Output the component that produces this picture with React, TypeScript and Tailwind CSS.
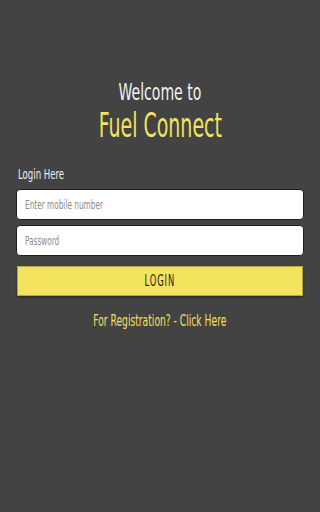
import React, { useState } from 'react';

// Narrow face: the screen uses a very condensed display font, so squeeze a condensed one
const font = { fontFamily: '"DejaVu Sans Condensed", "DejaVu Sans", sans-serif' };

const Squeeze: React.FC<{ className?: string; children: React.ReactNode }> = ({ className = '', children }) => (
  <span className={`inline-block whitespace-nowrap ${className}`}>{children}</span>
);

export default function App() {
  const [mobile, setMobile] = useState('');
  const [password, setPassword] = useState('');

  return (
    <div className="min-h-[512px] w-[320px] bg-[#434343] flex flex-col" style={font}>
      {/* Heading */}
      <div className="pt-[81px] flex flex-col items-center">
        <Squeeze className="text-[23px] leading-none text-[#f2f2f2] scale-x-[0.68] origin-center">Welcome to</Squeeze>
        <Squeeze className="mt-[4px] text-[34px] leading-none text-[#f3e25c] scale-x-[0.62] origin-center">Fuel Connect</Squeeze>
      </div>

      {/* Form */}
      <div className="mt-[25px] px-4 flex flex-col">
        <Squeeze className="ml-[2px] text-[14px] leading-none text-[#eeeeee] scale-x-[0.68] origin-left">Login Here</Squeeze>

        <label className="mt-[8px] relative h-[31px] rounded-[4px] border border-[#1e1e1e] bg-white flex items-center pl-2">
          {mobile === '' && (
            <Squeeze className="absolute left-2 text-[12px] leading-none text-[#8a8a8a] scale-x-[0.68] origin-left pointer-events-none">
              Enter mobile number
            </Squeeze>
          )}
          <input
            value={mobile}
            onChange={(e) => setMobile(e.target.value)}
            className="w-full bg-transparent outline-none text-[12px] text-[#333]"
          />
        </label>

        <label className="mt-[5px] relative h-[31px] rounded-[4px] border border-[#1e1e1e] bg-white flex items-center pl-2">
          {password === '' && (
            <Squeeze className="absolute left-2 text-[12px] leading-none text-[#8a8a8a] scale-x-[0.68] origin-left pointer-events-none">
              Password
            </Squeeze>
          )}
          <input
            type="password"
            value={password}
            onChange={(e) => setPassword(e.target.value)}
            className="w-full bg-transparent outline-none text-[12px] text-[#333]"
          />
        </label>

        <button className="mt-[10px] mx-[1px] h-[30px] bg-[#f3e35f] border border-[#b5a73c] shadow-[0_1px_2px_rgba(0,0,0,0.5)] flex items-center justify-center">
          <Squeeze className="text-[15px] leading-none tracking-[1.5px] text-[#1f1f1f] scale-x-[0.62] origin-center">LOGIN</Squeeze>
        </button>

        <div className="mt-[18px] flex justify-center">
          <Squeeze className="text-[15px] leading-none text-[#f3e25c] scale-x-[0.68] origin-center">For Registration? - Click Here</Squeeze>
        </div>
      </div>
    </div>
  );
}
